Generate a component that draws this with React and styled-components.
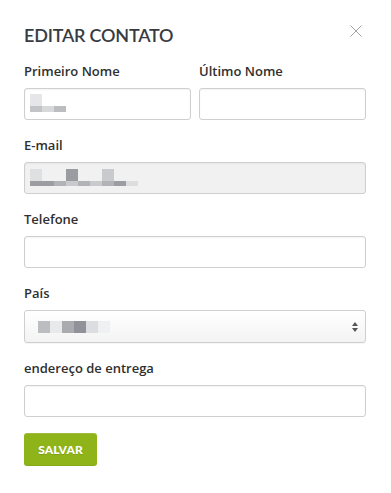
import styled, { createGlobalStyle, css } from "styled-components";

const GlobalStyle = createGlobalStyle`
  html, body {
    margin: 0;
    padding: 0;
    background: #ffffff;
  }
  * {
    box-sizing: border-box;
  }
`;

const Modal = styled.div`
  width: 391px;
  padding: 24px 25px 24px 24px;
  background: #fff;
  font-family: "Open Sans", "Liberation Sans", sans-serif;
`;

const Header = styled.div`
  display: flex;
  justify-content: space-between;
  align-items: flex-start;
  margin-bottom: 15px;
`;

const Title = styled.h1`
  margin: 0;
  font-family: Lato, "Liberation Sans", sans-serif;
  font-size: 18px;
  font-weight: 600;
  line-height: 23px;
  letter-spacing: -0.2px;
  color: #383c42;
`;

const Close = styled.button`
  all: unset;
  cursor: pointer;
  width: 12px;
  height: 12px;
  margin: 1px 4px 0 0;
  display: flex;
`;

const Row = styled.div`
  display: grid;
  grid-template-columns: 1fr 1fr;
  gap: 8px;
`;

const Group = styled.div`
  display: flex;
  flex-direction: column;
  gap: 8px;
  margin-bottom: 16px;
`;

const Label = styled.label`
  font-size: 13px;
  font-weight: 600;
  line-height: 18px;
  color: #2f2f2f;
`;

const fieldBase = css`
  height: 32px;
  width: 100%;
  border: 1px solid #cfcfcf;
  border-radius: 3px;
  box-shadow: inset 0 1px 2px rgba(0, 0, 0, 0.05);
  background: #fff;
  font: inherit;
`;

const Input = styled.input`
  ${fieldBase}
  padding: 0 8px;
  outline: none;
`;

const Field = styled.div`
  ${fieldBase}
  display: flex;
  align-items: ${(p) => (p.$select ? "center" : "flex-start")};
  justify-content: space-between;
  padding: ${(p) => (p.$select ? "0 7px 0 13px" : "5px 5px")};
  ${(p) =>
    p.$disabled &&
    css`
      background: #f1f1f1;
      padding-top: 6px;
    `}
  ${(p) =>
    p.$select &&
    css`
      height: 33px;
      background: linear-gradient(#ffffff, #f3f3f3);
      box-shadow: 0 1px 1px rgba(0, 0, 0, 0.04);
    `}
`;

const Arrows = styled.span`
  display: flex;
  flex-direction: column;
  gap: 2px;
  &::before,
  &::after {
    content: "";
    width: 0;
    height: 0;
    border-left: 3px solid transparent;
    border-right: 3px solid transparent;
  }
  &::before {
    border-bottom: 4px solid #555;
  }
  &::after {
    border-top: 4px solid #555;
  }
`;

const SaveButton = styled.button`
  all: unset;
  cursor: pointer;
  margin-top: 5px;
  width: 73px;
  height: 33px;
  display: flex;
  align-items: center;
  justify-content: center;
  background: #8fb41a;
  border-radius: 3px;
  box-shadow: inset 0 1px 0 rgba(255, 255, 255, 0.15),
    inset 0 -1px 0 rgba(0, 0, 0, 0.06);
  color: #fff;
  font-family: Lato, "Liberation Sans", sans-serif;
  font-weight: 900;
  font-size: 12px;
  letter-spacing: 0.1px;
  text-shadow: 0 1px 0 rgba(0, 0, 0, 0.12);
`;

// pixelated (blurred) values: [x, y, w, h, colour]
const firstName = [
  [0, 0, 12, 12, "#e6e6e8"],
  [0, 12, 12, 6, "#c3c4c7"],
  [12, 12, 12, 6, "#d7d8da"],
  [24, 12, 12, 6, "#bcbdc0"],
];

const email = [
  [0, 0, 12, 12, "#dfe0e2"],
  [36, 0, 12, 12, "#9a9ca1"],
  [72, 0, 12, 12, "#c9cacd"],
  ...["#9b9da2", "#9b9da2", "#b2b3b6", "#c9cacd", "#b2b3b6", "#c9cacd", "#b2b3b6", "#9b9da2", "#dcdddf"].map(
    (c, i) => [i * 12, 12, 12, 5, c]
  ),
];

const country = ["#bcbdc1", "#e8e9eb", "#a9abaf", "#8f9399", "#dcdde0", "#eff0f1"].map(
  (c, i) => [i * 12, 0, 12, 12, c]
);

const Mosaic = ({ cells }) => {
  const w = Math.max(...cells.map((c) => c[0] + c[2]));
  const h = Math.max(...cells.map((c) => c[1] + c[3]));
  return (
    <svg width={w} height={h} style={{ display: "block" }}>
      {cells.map(([x, y, cw, ch, fill], i) => (
        <rect key={i} x={x} y={y} width={cw} height={ch} fill={fill} />
      ))}
    </svg>
  );
};

export default function App() {
  return (
    <>
      <GlobalStyle />
      <Modal>
        <Header>
          <Title>EDITAR CONTATO</Title>
          <Close aria-label="Fechar">
            <svg width="12" height="12" viewBox="0 0 12 12">
              <path d="M0.5 0.5 L11.5 11.5 M11.5 0.5 L0.5 11.5" stroke="#a3a3a3" strokeWidth="1" fill="none" />
            </svg>
          </Close>
        </Header>

        <Row>
          <Group>
            <Label>Primeiro Nome</Label>
            <Field>
              <Mosaic cells={firstName} />
            </Field>
          </Group>
          <Group>
            <Label>Último Nome</Label>
            <Input />
          </Group>
        </Row>

        <Group>
          <Label>E-mail</Label>
          <Field $disabled>
            <Mosaic cells={email} />
          </Field>
        </Group>

        <Group>
          <Label>Telefone</Label>
          <Input />
        </Group>

        <Group>
          <Label>País</Label>
          <Field $select>
            <Mosaic cells={country} />
            <Arrows />
          </Field>
        </Group>

        <Group>
          <Label>endereço de entrega</Label>
          <Input />
        </Group>

        <SaveButton>SALVAR</SaveButton>
      </Modal>
    </>
  );
}
